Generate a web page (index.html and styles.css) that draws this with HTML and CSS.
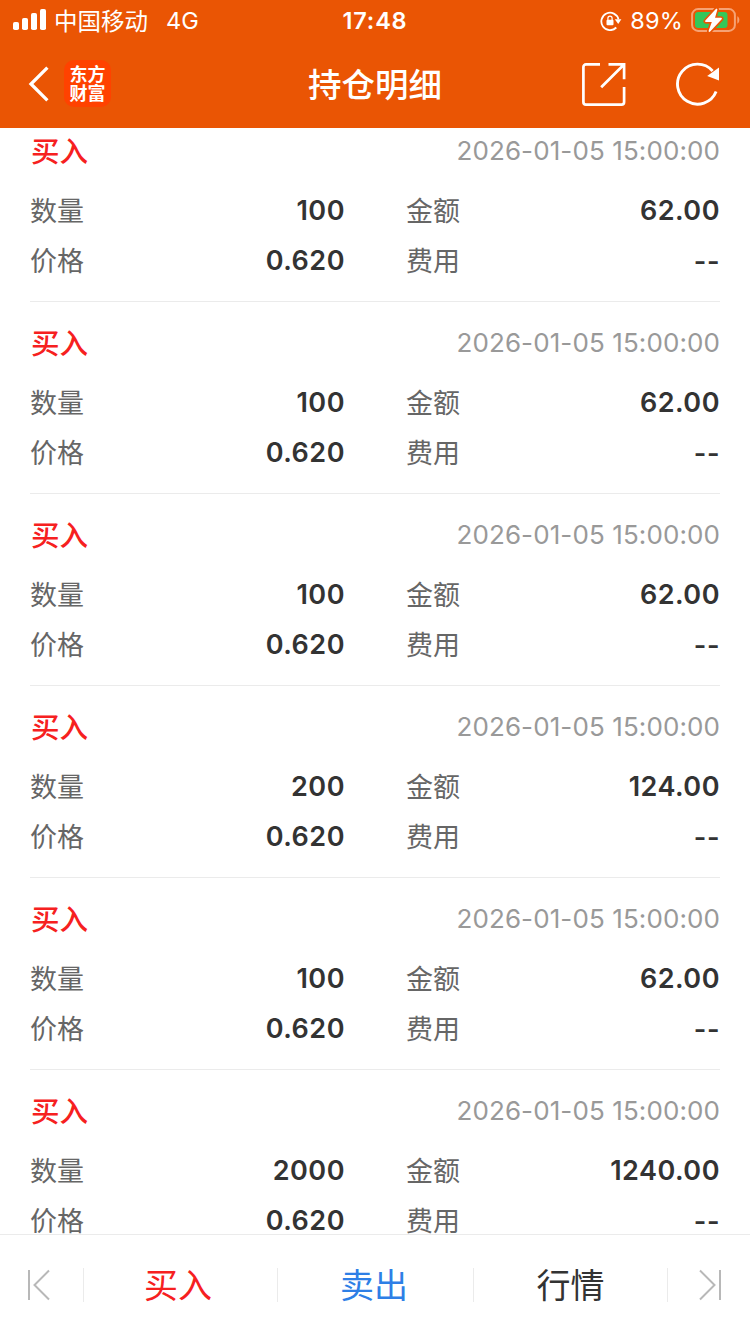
FILE: index.html
```html
<!DOCTYPE html>
<html lang="zh-CN">
<head>
<meta charset="utf-8">
<title>持仓明细</title>
<link rel="stylesheet" href="styles.css">
</head>
<body>
<div class="app">
  <header class="top">
    <div class="status">
      <div class="status-left">
        <svg class="signal" width="33" height="22" viewBox="0 0 33 22" fill="#fff"><rect x="0" y="13" width="6" height="8" rx="1.8"/><rect x="9" y="9" width="6" height="12" rx="1.8"/><rect x="18" y="4" width="6" height="17" rx="1.8"/><rect x="27" y="0" width="6" height="21" rx="1.8"/></svg>
        <span class="carrier">中国移动</span>
        <span class="network">4G</span>
      </div>
      <div class="clock">17:48</div>
      <div class="status-right">
        <svg class="lock" width="22" height="20" viewBox="0 0 22 20"><path d="M16.300 16.500A8.700 8.700 0 1 1 18.500 8.400" fill="none" stroke="#fff" stroke-width="1.800"/><path d="M14.800 8.300h6.600l-3.200 4.800z" fill="#fff"/><rect x="6.500" y="8.700" width="7" height="5.600" rx="1" fill="#fff"/><path d="M7.900 9V7.200a2.100 2.100 0 0 1 4.200 0V9" fill="none" stroke="#fff" stroke-width="1.200"/></svg>
        <span class="percent">89%</span>
        <svg class="battery" width="50" height="26" viewBox="0 0 50 26"><rect x="1.100" y="2.100" width="42.800" height="21.800" rx="6" fill="none" stroke="#f6a274" stroke-width="2"/><path d="M46.300 9.300c2.700 1 2.700 6.400 0 7.400z" fill="#f6a274"/><rect x="4" y="5" width="32.500" height="16" rx="3.200" fill="#34c759"/><path d="M25.500 2.500L15 14.200h7L18.500 24 30 11.700h-7.200z" fill="#ea5504" stroke="#ea5504" stroke-width="5" stroke-linejoin="round"/><path d="M25.500 2.500L15 14.200h7L18.500 24 30 11.700h-7.200z" fill="#fff" stroke="#fff" stroke-width="1.800" stroke-linejoin="round"/></svg>
      </div>
    </div>
    <div class="nav">
      <div class="nav-left">
        <svg class="back" width="22" height="36" viewBox="0 0 22 36"><path d="M19.400 1.700L3 18l16.400 16.300" fill="none" stroke="#fff" stroke-width="3.300"/></svg>
        <div class="logo"><span>东方</span><span>财富</span></div>
      </div>
      <h1 class="title">持仓明细</h1>
      <div class="nav-right">
        <svg width="44" height="44" viewBox="0 0 44 44" fill="none" stroke="#fff" stroke-width="2.700"><path d="M18 2.400H4A2.600 2.600 0 0 0 1.400 5v35A2.600 2.600 0 0 0 4 42.600h35.500a2.600 2.600 0 0 0 2.600-2.600V25M26.500 2.400h15.600v14.800M19.200 25.300L41.500 3"/></svg>
        <svg width="46" height="46" viewBox="0 0 46 46"><path d="M41.100 30.500A20 20 0 1 1 37.600 10" fill="none" stroke="#fff" stroke-width="2.900"/><path d="M44 6.500v13L32.200 15z" fill="#fff"/></svg>
      </div>
    </div>
  </header>

  <main class="list">
    <article class="record">
      <div class="head"><span class="side">买入</span><time class="time">2026-01-05 15:00:00</time></div>
      <dl class="fields"><dt>数量</dt><dd>100</dd><dt>金额</dt><dd>62.00</dd><dt>价格</dt><dd>0.620</dd><dt>费用</dt><dd class="none">--</dd></dl>
    </article>
    <article class="record">
      <div class="head"><span class="side">买入</span><time class="time">2026-01-05 15:00:00</time></div>
      <dl class="fields"><dt>数量</dt><dd>100</dd><dt>金额</dt><dd>62.00</dd><dt>价格</dt><dd>0.620</dd><dt>费用</dt><dd class="none">--</dd></dl>
    </article>
    <article class="record">
      <div class="head"><span class="side">买入</span><time class="time">2026-01-05 15:00:00</time></div>
      <dl class="fields"><dt>数量</dt><dd>100</dd><dt>金额</dt><dd>62.00</dd><dt>价格</dt><dd>0.620</dd><dt>费用</dt><dd class="none">--</dd></dl>
    </article>
    <article class="record">
      <div class="head"><span class="side">买入</span><time class="time">2026-01-05 15:00:00</time></div>
      <dl class="fields"><dt>数量</dt><dd>200</dd><dt>金额</dt><dd>124.00</dd><dt>价格</dt><dd>0.620</dd><dt>费用</dt><dd class="none">--</dd></dl>
    </article>
    <article class="record">
      <div class="head"><span class="side">买入</span><time class="time">2026-01-05 15:00:00</time></div>
      <dl class="fields"><dt>数量</dt><dd>100</dd><dt>金额</dt><dd>62.00</dd><dt>价格</dt><dd>0.620</dd><dt>费用</dt><dd class="none">--</dd></dl>
    </article>
    <article class="record">
      <div class="head"><span class="side">买入</span><time class="time">2026-01-05 15:00:00</time></div>
      <dl class="fields"><dt>数量</dt><dd>2000</dd><dt>金额</dt><dd>1240.00</dd><dt>价格</dt><dd>0.620</dd><dt>费用</dt><dd class="none">--</dd></dl>
    </article>
  </main>

  <footer class="tabs">
    <div class="edge first"><svg width="24" height="32" viewBox="0 0 24 32" fill="none" stroke="#b8b8b8" stroke-width="2"><path d="M2 1v30M22 1.500L7.500 16 22 30.500"/></svg></div>
    <div class="tab buy">买入</div>
    <div class="tab sell">卖出</div>
    <div class="tab quote">行情</div>
    <div class="edge last"><svg width="24" height="32" viewBox="0 0 24 32" fill="none" stroke="#b8b8b8" stroke-width="2"><path d="M22 1v30M2 1.500L16.500 16 2 30.500"/></svg></div>
  </footer>
</div>
</body>
</html>
```

FILE: styles.css
```css
* { box-sizing: border-box; }
body { margin: 0; background: #fff; font-family: Inter, "Noto Sans CJK SC", sans-serif; }
svg { display: block; flex: none; }
.app { width: 750px; height: 1334px; display: flex; flex-direction: column; overflow: hidden; }

.top { flex: none; height: 128px; background: #ea5504; color: #fff; }
.status { height: 40px; padding: 0 11px 0 13px; display: grid; grid-template-columns: 1fr auto 1fr; align-items: center; font-size: 23.500px; line-height: 40px; white-space: nowrap; }
.status-left, .status-right { display: flex; align-items: center; }
.status-right { justify-content: flex-end; }
.carrier { margin-left: 8px; padding-top: 3px; line-height: 37px; }
.network { margin-left: 18px; padding-top: 2px; line-height: 38px; }
.clock { margin-right: 2px; padding-top: 2px; line-height: 38px; font-weight: 600; letter-spacing: .8px; }
.lock { margin: 1px 8px 0 0; }
.percent { margin-right: 8px; padding-top: 2px; line-height: 38px; letter-spacing: .2px; }
.battery { margin-right: -2px; }

.nav { height: 88px; padding: 0 29px 0 28px; display: grid; grid-template-columns: 1fr auto 1fr; align-items: center; }
.nav-left { display: flex; align-items: center; gap: 14px; }
.logo { width: 47px; height: 47px; margin-top: -1px; padding-top: 1px; border-radius: 10px; background: #ff4200; display: flex; flex-direction: column; align-items: center; justify-content: center; font-size: 18px; line-height: 19.500px; font-weight: 700; }
.title { margin: 0; padding: 3px 0 0 1px; font-size: 33.500px; line-height: 85px; font-weight: 500; }
.nav-right { display: flex; align-items: center; justify-content: flex-end; gap: 49px; }

.list { flex: 1; min-height: 0; overflow: hidden; padding: 0 30px; }
.record { height: 192px; padding-top: 16px; border-bottom: 1px solid #ebebeb; }
.record:first-child { margin-top: -18px; }
.head { height: 50px; margin-bottom: 10px; display: flex; justify-content: space-between; }
.side { padding: 1px 0 0 1px; line-height: 49px; font-size: 28.500px; font-weight: 500; color: #f62020; }
.time { padding-top: 1px; line-height: 48px; font-size: 26px; letter-spacing: .1px; color: #999; }
.fields { margin: 0; display: grid; grid-template-columns: 60px 255px 120px 1fr; grid-auto-rows: 50px; line-height: 50px; }
.fields dt { padding-top: 2px; line-height: 48px; font-size: 27px; color: #666; white-space: nowrap; }
.fields dt:nth-of-type(even) { padding-left: 61px; }
.fields dd { margin: 0; text-align: right; font-size: 27px; font-weight: 600; letter-spacing: .5px; color: #333; }
.fields .none { padding-top: 1px; }

.tabs { flex: none; height: 100px; border-top: 1px solid #ebebeb; display: grid; grid-template-columns: 84px 194px 196px 194px 82px; align-items: center; background: #fff; }
.tab, .first { height: 34px; border-right: 1px solid #ebebeb; }
.edge { display: flex; align-items: center; padding-left: 27px; }
.edge.last { padding-left: 30px; }
.tab { display: flex; align-items: center; justify-content: center; padding-top: 2px; font-size: 34px; line-height: 34px; }
.buy { padding-right: 5px; color: #f62020; }
.sell { padding-right: 3px; color: #2e7fe6; }
.quote { color: #333; }
```
